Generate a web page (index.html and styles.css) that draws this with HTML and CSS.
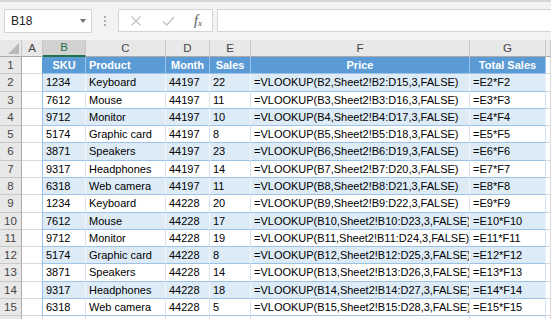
FILE: index.html
```html
<!DOCTYPE html>
<html lang="en">
<head>
    <meta charset="UTF-8">
    <title>Sheet1</title>
    <link rel="stylesheet" href="styles.css">
</head>
<body>
    <div class="toolbar">
        <div class="name-box">
            <span class="name-text">B18</span>
            <span class="name-arrow"></span>
        </div>
        <div class="grip">
            <span></span><span></span><span></span>
        </div>
        <div class="fx-buttons">
            <svg class="fx-icon" width="12" height="12" viewBox="0 0 12 12"><path d="M1.5 1.5 L10.5 10.5 M10.5 1.5 L1.5 10.5" stroke="#c4c4c4" stroke-width="1.3" fill="none"/></svg>
            <svg class="fx-icon" width="13" height="12" viewBox="0 0 13 12"><path d="M1 6.5 L4.8 10 L12 2" stroke="#c4c4c4" stroke-width="1.5" fill="none"/></svg>
            <span class="fx-label">f<sub>x</sub></span>
        </div>
        <div class="formula-input"></div>
    </div>

    <div class="sheet">
        <div class="row col-heads">
            <div class="corner"><span class="corner-tri"></span></div>
            <div class="ch">A</div>
            <div class="ch active">B</div>
            <div class="ch">C</div>
            <div class="ch">D</div>
            <div class="ch">E</div>
            <div class="ch">F</div>
            <div class="ch">G</div>
            <div class="ch"></div>
        </div>

        <div class="row head">
            <div class="rh">1</div><div class="c"></div>
            <div class="c t center">SKU</div><div class="c t">Product</div><div class="c t center">Month</div><div class="c t center">Sales</div><div class="c t center">Price</div><div class="c t center">Total Sales</div>
            <div class="c"></div>
        </div>
        <div class="row band">
            <div class="rh">2</div><div class="c"></div>
            <div class="c t">1234</div><div class="c t">Keyboard</div><div class="c t">44197</div><div class="c t">22</div><div class="c t">=VLOOKUP(B2,Sheet2!B2:D15,3,FALSE)</div><div class="c t">=E2*F2</div>
            <div class="c"></div>
        </div>
        <div class="row plain">
            <div class="rh">3</div><div class="c"></div>
            <div class="c t">7612</div><div class="c t">Mouse</div><div class="c t">44197</div><div class="c t">11</div><div class="c t">=VLOOKUP(B3,Sheet2!B3:D16,3,FALSE)</div><div class="c t">=E3*F3</div>
            <div class="c"></div>
        </div>
        <div class="row band">
            <div class="rh">4</div><div class="c"></div>
            <div class="c t">9712</div><div class="c t">Monitor</div><div class="c t">44197</div><div class="c t">10</div><div class="c t">=VLOOKUP(B4,Sheet2!B4:D17,3,FALSE)</div><div class="c t">=E4*F4</div>
            <div class="c"></div>
        </div>
        <div class="row plain">
            <div class="rh">5</div><div class="c"></div>
            <div class="c t">5174</div><div class="c t">Graphic card</div><div class="c t">44197</div><div class="c t">8</div><div class="c t">=VLOOKUP(B5,Sheet2!B5:D18,3,FALSE)</div><div class="c t">=E5*F5</div>
            <div class="c"></div>
        </div>
        <div class="row band">
            <div class="rh">6</div><div class="c"></div>
            <div class="c t">3871</div><div class="c t">Speakers</div><div class="c t">44197</div><div class="c t">23</div><div class="c t">=VLOOKUP(B6,Sheet2!B6:D19,3,FALSE)</div><div class="c t">=E6*F6</div>
            <div class="c"></div>
        </div>
        <div class="row plain">
            <div class="rh">7</div><div class="c"></div>
            <div class="c t">9317</div><div class="c t">Headphones</div><div class="c t">44197</div><div class="c t">14</div><div class="c t">=VLOOKUP(B7,Sheet2!B7:D20,3,FALSE)</div><div class="c t">=E7*F7</div>
            <div class="c"></div>
        </div>
        <div class="row band">
            <div class="rh">8</div><div class="c"></div>
            <div class="c t">6318</div><div class="c t">Web camera</div><div class="c t">44197</div><div class="c t">11</div><div class="c t">=VLOOKUP(B8,Sheet2!B8:D21,3,FALSE)</div><div class="c t">=E8*F8</div>
            <div class="c"></div>
        </div>
        <div class="row plain">
            <div class="rh">9</div><div class="c"></div>
            <div class="c t">1234</div><div class="c t">Keyboard</div><div class="c t">44228</div><div class="c t">20</div><div class="c t">=VLOOKUP(B9,Sheet2!B9:D22,3,FALSE)</div><div class="c t">=E9*F9</div>
            <div class="c"></div>
        </div>
        <div class="row band">
            <div class="rh">10</div><div class="c"></div>
            <div class="c t">7612</div><div class="c t">Mouse</div><div class="c t">44228</div><div class="c t">17</div><div class="c t">=VLOOKUP(B10,Sheet2!B10:D23,3,FALSE)</div><div class="c t">=E10*F10</div>
            <div class="c"></div>
        </div>
        <div class="row plain">
            <div class="rh">11</div><div class="c"></div>
            <div class="c t">9712</div><div class="c t">Monitor</div><div class="c t">44228</div><div class="c t">19</div><div class="c t">=VLOOKUP(B11,Sheet2!B11:D24,3,FALSE)</div><div class="c t">=E11*F11</div>
            <div class="c"></div>
        </div>
        <div class="row band">
            <div class="rh">12</div><div class="c"></div>
            <div class="c t">5174</div><div class="c t">Graphic card</div><div class="c t">44228</div><div class="c t">8</div><div class="c t">=VLOOKUP(B12,Sheet2!B12:D25,3,FALSE)</div><div class="c t">=E12*F12</div>
            <div class="c"></div>
        </div>
        <div class="row plain">
            <div class="rh">13</div><div class="c"></div>
            <div class="c t">3871</div><div class="c t">Speakers</div><div class="c t">44228</div><div class="c t">14</div><div class="c t">=VLOOKUP(B13,Sheet2!B13:D26,3,FALSE)</div><div class="c t">=E13*F13</div>
            <div class="c"></div>
        </div>
        <div class="row band">
            <div class="rh">14</div><div class="c"></div>
            <div class="c t">9317</div><div class="c t">Headphones</div><div class="c t">44228</div><div class="c t">18</div><div class="c t">=VLOOKUP(B14,Sheet2!B14:D27,3,FALSE)</div><div class="c t">=E14*F14</div>
            <div class="c"></div>
        </div>
        <div class="row plain">
            <div class="rh">15</div><div class="c"></div>
            <div class="c t">6318</div><div class="c t">Web camera</div><div class="c t">44228</div><div class="c t">5</div><div class="c t">=VLOOKUP(B15,Sheet2!B15:D28,3,FALSE)</div><div class="c t">=E15*F15</div>
            <div class="c"></div>
        </div>
        <div class="row">
            <div class="rh"></div><div class="c"></div>
            <div class="c"></div><div class="c"></div><div class="c"></div><div class="c"></div><div class="c"></div><div class="c"></div>
            <div class="c"></div>
        </div>
    </div>
</body>
</html>
```

FILE: styles.css
```css
body {
    margin: 0;
    width: 551px;
    height: 319px;
    overflow: hidden;
    background: #ffffff;
    font-family: "Liberation Sans", Arial, sans-serif;
    color: #000000;
}

/* formula bar */
.toolbar {
    height: 40px;
    box-sizing: border-box;
    background: #f3f3f3;
    border-top: 2px solid #d6d6d6;
    display: flex;
    align-items: flex-start;
    padding: 7px 0 0 4px;
}

.name-box {
    width: 88px;
    height: 24px;
    box-sizing: border-box;
    background: #ffffff;
    border: 1px solid #d4d4d4;
    display: flex;
    align-items: center;
    justify-content: space-between;
    padding: 0 5px 0 6px;
}

.name-text {
    font-size: 12px;
    color: #222222;
}

.name-arrow {
    width: 0;
    height: 0;
    border-left: 3.5px solid transparent;
    border-right: 3.5px solid transparent;
    border-top: 4px solid #707070;
}

.grip {
    width: 26px;
    height: 24px;
    display: flex;
    flex-direction: column;
    align-items: center;
    justify-content: center;
    gap: 2px;
}

.grip span {
    width: 2px;
    height: 2px;
    background: #b0b0b0;
}

.fx-buttons {
    width: 95px;
    height: 23px;
    box-sizing: border-box;
    background: #ffffff;
    border: 1px solid #d4d4d4;
    display: flex;
    align-items: center;
    padding: 0 0 0 11px;
    gap: 20px;
}

.fx-label {
    font-family: "Liberation Serif", serif;
    font-style: italic;
    font-size: 14px;
    color: #505050;
    margin-left: -1px;
}

.fx-label sub {
    font-size: 9px;
    vertical-align: -1px;
}

.formula-input {
    flex-grow: 1;
    height: 23px;
    margin-left: 4px;
    margin-right: -2px;
    box-sizing: border-box;
    background: #ffffff;
    border: 1px solid #d4d4d4;
}

/* grid */
.sheet {
    display: flex;
    flex-direction: column;
}

.row {
    display: grid;
    grid-template-columns: 22px 21px 43px 80px 44px 41px 219px 76px 1fr;
    height: 17.29px;
    font-size: 11px;
}

.row > div {
    box-sizing: border-box;
    border-right: 1px solid #d9d9d9;
    border-bottom: 1px solid #d9d9d9;
    overflow: hidden;
    white-space: nowrap;
}

.col-heads {
    height: 17px;
}

.col-heads > div {
    background: #e8e8e8;
    color: #444444;
    text-align: center;
    font-size: 11.5px;
    line-height: 16px;
    border-right: 1px solid #c9c9c9;
    border-bottom: 1px solid #ababab;
}

.col-heads .active {
    background: #d2d2d2;
    color: #217346;
    border-bottom: 2px solid #217346;
    line-height: 15px;
}

.corner {
    position: relative;
}

.corner-tri {
    position: absolute;
    right: 2px;
    bottom: 2px;
    width: 0;
    height: 0;
    border-left: 11px solid transparent;
    border-bottom: 11px solid #b8b8b8;
}

.row > .rh {
    background: #e8e8e8;
    color: #444444;
    text-align: center;
    font-size: 11.5px;
    line-height: 17px;
    border-right: 1px solid #ababab;
    border-bottom: 1px solid #c9c9c9;
}

.t {
    padding: 0 0 0 3px;
    line-height: 17px;
}

.center {
    text-align: center;
    padding: 0;
}

.head .t {
    background: #5b9bd5;
    color: #ffffff;
    font-weight: bold;
    border-right-color: #9dc3e6;
    border-bottom-color: #9dc3e6;
}

.band .t {
    background: #ddebf7;
    border-right-color: #f4f8fc;
    border-bottom-color: #9dc3e6;
}

.plain .t {
    background: #ffffff;
    border-right-color: #d6e4f2;
    border-bottom-color: #9dc3e6;
}

.row > .t:nth-child(3) {
    border-left: 1px solid #9dc3e6;
    margin-left: -1px;
}

.head > .t:nth-child(3) {
    border-left-color: #5b9bd5;
}
```
